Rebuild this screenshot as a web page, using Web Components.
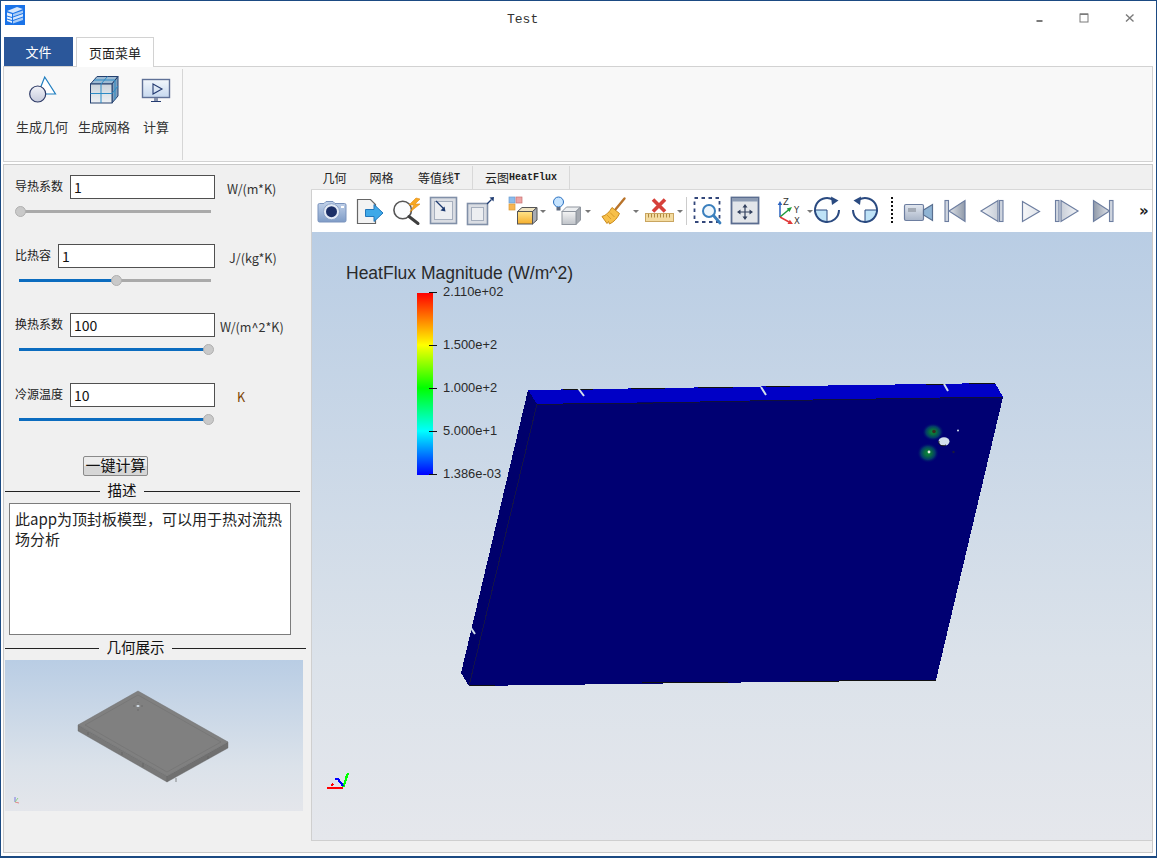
<!DOCTYPE html>
<html>
<head>
<meta charset="utf-8">
<title>Test</title>
<style>
html, body { margin: 0; padding: 0; background: #fff; }
body { font-family: "Noto Sans CJK SC", "Open Sans", sans-serif; color: #222; }
</style>
</head>
<body>
<app-window>
  <title-bar slot="top">Test</title-bar>
  <ribbon-bar slot="top">
    <ribbon-button icon="geometry" width="62">生成几何</ribbon-button>
    <ribbon-button icon="grid" width="62">生成网格</ribbon-button>
    <ribbon-button icon="monitor" width="42">计算</ribbon-button>
  </ribbon-bar>
  <side-panel slot="side">
    <param-block label="导热系数" value="1" unit-gap="12" level="0">W/(m*K)</param-block>
    <param-block label="比热容" value="1" unit-gap="14" level="51">J/(kg*K)</param-block>
    <param-block label="换热系数" value="100" unit-gap="5" level="100" style="margin-bottom:1px">W/(m^2*K)</param-block>
    <param-block label="冷源温度" value="10" unit-gap="22" level="100" tint="#7a4200">K</param-block>
    <push-button>一键计算</push-button>
    <group-title lead="95" width="295">描述</group-title>
    <note-box>此app为顶封板模型，可以用于热对流热场分析</note-box>
    <group-title lead="94" width="301" style="margin-top:4px">几何展示</group-title>
    <preview-view></preview-view>
  </side-panel>
  <view-panel slot="main">
    <view-tab slot="tabs">几何</view-tab>
    <view-tab slot="tabs">网格</view-tab>
    <view-tab slot="tabs" divided style="padding-left:13px">等值线<span class="m">T</span></view-tab>
    <view-tab slot="tabs" divided>云图<span class="m">HeatFlux</span></view-tab>
    <tool-icon slot="tools" icon="camera" width="38"></tool-icon>
    <tool-icon slot="tools" icon="export" width="36"></tool-icon>
    <tool-icon slot="tools" icon="spark" width="38"></tool-icon>
    <tool-icon slot="tools" icon="boxin" width="37"></tool-icon>
    <tool-icon slot="tools" icon="boxout" width="42"></tool-icon>
    <tool-icon slot="tools" icon="color" width="45" drop></tool-icon>
    <tool-icon slot="tools" icon="light" width="48" drop></tool-icon>
    <tool-icon slot="tools" icon="broom" width="44" drop></tool-icon>
    <tool-icon slot="tools" icon="ruler" width="41" drop></tool-icon>
    <tool-sep slot="tools" width="6"></tool-sep>
    <tool-icon slot="tools" icon="zoombox" width="38"></tool-icon>
    <tool-icon slot="tools" icon="fit" width="45"></tool-icon>
    <tool-icon slot="tools" icon="axes" width="38" drop></tool-icon>
    <tool-icon slot="tools" icon="rotcw" width="37"></tool-icon>
    <tool-icon slot="tools" icon="rotccw" width="41"></tool-icon>
    <tool-sep slot="tools" width="12" dotted></tool-sep>
    <tool-icon slot="tools" icon="movie" width="37"></tool-icon>
    <tool-icon slot="tools" icon="first" width="37"></tool-icon>
    <tool-icon slot="tools" icon="prev" width="38"></tool-icon>
    <tool-icon slot="tools" icon="play" width="37"></tool-icon>
    <tool-icon slot="tools" icon="next" width="36"></tool-icon>
    <tool-icon slot="tools" icon="last" width="51"></tool-icon>
    <more-mark slot="tools"></more-mark>
    <vtk-view slot="view">
      <scalar-bar title-text="HeatFlux Magnitude (W/m^2)"></scalar-bar>
    </vtk-view>
  </view-panel>
</app-window>

<script>
const RIBBON_ICONS = {
    geometry: `<svg width="32" height="30" viewBox="0 0 32 30">
        <defs><linearGradient id="c" x1="0" y1="0" x2="0" y2="1"><stop offset="0" stop-color="#f2f3f8"/><stop offset="1" stop-color="#c6cbdc"/></linearGradient></defs>
        <path d="M18.7 2 L29.5 19 H12 Z" fill="#fff" stroke="#1f7ec0" stroke-width="1.2"/>
        <circle cx="11.7" cy="19" r="8" fill="url(#c)" stroke="#2d3a66" stroke-width="1.2"/>
    </svg>`,
    grid: `<svg width="32" height="30" viewBox="0 0 32 30">
        <defs><linearGradient id="f" x1="0" y1="0" x2="0" y2="1"><stop offset="0" stop-color="#c9d2da"/><stop offset="1" stop-color="#eef1f4"/></linearGradient></defs>
        <path d="M2.5 9 L9 1.5 H30 L24 9 Z" fill="#9dbad2" stroke="#24406f"/>
        <path d="M24 9 L30 1.5 V21 L24 28 Z" fill="#7f9fbd" stroke="#24406f"/>
        <rect x="2.5" y="9" width="21.5" height="19" fill="url(#f)" stroke="#24406f"/>
        <path d="M13 9 V28 M2.5 18.5 H24 M13 9 L19.5 1.5 M6 5 H27 M27 5 V24.5 M24 18.5 L30 11" fill="none" stroke="#2b8bc6"/>
    </svg>`,
    monitor: `<svg width="32" height="30" viewBox="0 0 32 30">
        <defs><linearGradient id="s" x1="0" y1="0" x2="0" y2="1"><stop offset="0" stop-color="#f2f7fc"/><stop offset="1" stop-color="#c6d8ee"/></linearGradient></defs>
        <rect x="2.5" y="4.5" width="27" height="18" fill="url(#s)" stroke="#5f7197" stroke-width="1.4"/>
        <path d="M13 9 L22 14 L13 19 Z" fill="none" stroke="#233a70" stroke-width="1.1"/>
        <rect x="14" y="23" width="4" height="3" fill="#8793ad"/>
        <rect x="11" y="26" width="10" height="1" fill="#233a70"/>
    </svg>`
};

const VCR = (d, bar, fill) => `<defs><linearGradient id="v" x1="0" y1="0" x2="1" y2="0"><stop offset="0" stop-color="${fill[0]}"/><stop offset="1" stop-color="${fill[1]}"/></linearGradient></defs>
    <path d="${d}" fill="url(#v)" stroke="#6d7ea0" stroke-width="1.2"/>` +
    (bar != null ? `<rect x="${bar}" y="4.500" width="3.500" height="21" fill="#cfd5df" stroke="#6d7ea0" stroke-width="1.100"/>` : "");

const ROTATE = `<path d="M14 14H2A12 12 0 0 0 14 26Z" fill="#bfe3f7" stroke="#2a4a80"/>
        <path d="M26 14A12 12 0 1 1 20 3.600" fill="none" stroke="#2a4a80" stroke-width="2"/>
        <path d="M18 .5L25.500 4.500L19 9Z" fill="#2a4a80"/>`;

const TOOL_ICONS = {
    camera: `<defs><linearGradient id="g" x1="0" y1="0" x2="0" y2="1"><stop offset="0" stop-color="#c3d3ea"/><stop offset="1" stop-color="#7f9cc7"/></linearGradient></defs>
        <path d="M2.500 7.500H7l2-2h7l2 2h9.500a1.500 1.500 0 0 1 1.500 1.500V24.500a1.500 1.500 0 0 1-1.500 1.500H2.500A1.500 1.500 0 0 1 1 24.500V9a1.500 1.500 0 0 1 1.500-1.500z" fill="url(#g)" stroke="#7a93bd"/>
        <circle cx="14.500" cy="15.700" r="8" fill="#e3eaf5" stroke="#8ea4c8"/>
        <circle cx="14.500" cy="15.700" r="5.500" fill="#1c2f66"/>
        <rect x="24" y="10" width="3" height="2" fill="#fff"/>`,
    export: `<path d="M2.500 3.500H15.500L20.500 8.500V27.500H2.500Z" fill="#f3f3f3" stroke="#666" stroke-width="1.200"/>
        <path d="M10.500 13.500H19V8.500L28 17L19 25.500V20.500H10.500Z" fill="#3fa9e8" stroke="#2277bb"/>`,
    spark: `<circle cx="11.700" cy="14" r="8.800" fill="#fbfcfd" stroke="#555" stroke-width="1.600"/>
        <path d="M18 20.500L27 27.500" stroke="#3e3e3e" stroke-width="3" stroke-linecap="round"/>
        <path d="M25 2L18 9H23L19 16L29 8H24L29 3Z" fill="#f7a823" stroke="#e38a10" stroke-width=".6"/>`,
    boxin: `<rect x="1.500" y="1.500" width="26" height="26" fill="#dadde3" stroke="#8190a8" stroke-width="1.600"/>
        <rect x="5.500" y="5.500" width="18" height="18" fill="#eceef1" stroke="#a5aebd"/>
        <path d="M7 5L14.500 12.500" stroke="#1d3a70" stroke-width="1.200"/><path d="M11.500 14.500L16.500 15.500L15.500 10.500Z" fill="#1d3a70"/>`,
    boxout: `<rect x="1.500" y="7.500" width="20" height="21" fill="#dadde3" stroke="#8190a8" stroke-width="1.600"/>
        <rect x="5.500" y="11.500" width="12" height="13" fill="#eceef1" stroke="#a5aebd"/>
        <path d="M21 8L25.500 3.500" stroke="#1d3a70" stroke-width="1.200"/><path d="M23.500 1.500L28 1L27.500 5.500Z" fill="#1d3a70"/>`,
    color: `<defs><linearGradient id="g" x1="0" y1="0" x2="0" y2="1"><stop offset="0" stop-color="#ffe48a"/><stop offset="1" stop-color="#f5ae2c"/></linearGradient></defs>
        <rect x="1" y="1" width="6" height="6" fill="#8cbcec" stroke="#6b9cd0" stroke-width=".7"/>
        <rect x="8" y="1" width="6" height="6" fill="#eda3a3" stroke="#c97070" stroke-width=".7"/>
        <rect x="1" y="8" width="6" height="6" fill="#f7b552" stroke="#d99a3a" stroke-width=".7"/>
        <path d="M9.500 15.500L14 11.500H29L24.500 15.500Z" fill="#efe3c0" stroke="#555"/>
        <path d="M24.500 15.500L29 11.500V24L24.500 28Z" fill="#a9adb5" stroke="#555"/>
        <rect x="9.500" y="15.500" width="15" height="12.500" fill="url(#g)" stroke="#555"/>`,
    light: `<defs><linearGradient id="g" x1="0" y1="0" x2="0" y2="1"><stop offset="0" stop-color="#f4f4f4"/><stop offset="1" stop-color="#bfc3c9"/></linearGradient></defs>
        <circle cx="5.500" cy="6" r="5" fill="#c6e4ff" stroke="#2a70c0"/>
        <rect x="3.500" y="11" width="4" height="3.500" fill="#5c6a80"/>
        <path d="M9 15.500L13.500 11H27.500L23 15.500Z" fill="#eceef0" stroke="#8f959e"/>
        <path d="M23 15.500L27.500 11V24L23 28.500Z" fill="#a6aab1" stroke="#8f959e"/>
        <rect x="9" y="15.500" width="14" height="13" fill="url(#g)" stroke="#8f959e"/>`,
    broom: `<path d="M23.500 2.500L14 14" stroke="#b8732a" stroke-width="2.400" stroke-linecap="round"/>
        <path d="M11 11.500L18.500 17.500C16.500 22 13 26 8.500 28L7.500 25.500L6 27.500L1 20.500C5 19.500 8.500 16 11 11.500Z" fill="#f7c04a" stroke="#c98a1e"/>
        <path d="M6 19L10 23M9 16.500L13.500 21" stroke="#d99a2a"/>`,
    ruler: `<path d="M8 3.500L20 15.500M20 3.500L8 15.500" stroke="#d6403a" stroke-width="3.600"/>
        <rect x=".5" y="17.500" width="28" height="8" fill="#f3dba0" stroke="#c9a560"/>
        <path d="M3.500 18V21.500M6.500 18V21.500M9.500 18V21.500M12.500 18V21.500M15.500 18V21.500M18.500 18V21.500M21.500 18V21.500M24.500 18V21.500" stroke="#b08a40"/>`,
    zoombox: `<rect x="2.500" y="2" width="25" height="24" fill="none" stroke="#33477a" stroke-width="1.800" stroke-dasharray="3.500 3.500"/>
        <circle cx="17" cy="15" r="6" fill="#eef6fc" stroke="#3a7fbd" stroke-width="2"/>
        <path d="M21.500 19.500L28 27" stroke="#3a7fbd" stroke-width="2.800" stroke-linecap="round"/>`,
    fit: `<rect x="1.500" y="1.500" width="27" height="26" fill="#e3e6ea" stroke="#5b6d90" stroke-width="1.800"/>
        <rect x="2" y="2" width="26" height="3.500" fill="#8c9bb3"/>
        <path d="M15 10V22M9 16H21" stroke="#33415e" stroke-width="1.200"/>
        <path d="M15 8L12.500 11.500H17.500ZM15 24L12.500 20.500H17.500ZM7 16L10.500 13.500V18.500ZM23 16L19.500 13.500V18.500Z" fill="#33415e"/>`,
    axes: `<path d="M5 21V8" stroke="#2a62c0" stroke-width="1.500"/><path d="M5 5L2.700 9H7.300Z" fill="#2a62c0"/>
        <path d="M5 21L14 13.500" stroke="#1f9a3a" stroke-width="1.500"/><path d="M17 11L11.800 12.500L14.500 16Z" fill="#1f9a3a"/>
        <path d="M5 21L14 26" stroke="#e03a3a" stroke-width="1.500"/><path d="M18 28L12.500 28L14.800 23.800Z" fill="#e03a3a"/>
        <text x="8" y="9" font-family="DejaVu Sans" font-size="8.500" fill="#333">Z</text>
        <text x="19" y="17" font-family="DejaVu Sans" font-size="8.500" fill="#333">Y</text>
        <text x="19" y="28" font-family="DejaVu Sans" font-size="8.500" fill="#333">X</text>`,
    rotcw: ROTATE,
    rotccw: `<g transform="translate(29,0) scale(-1,1)">${ROTATE}</g>`,
    movie: `<defs><linearGradient id="g" x1="0" y1="0" x2="0" y2="1"><stop offset="0" stop-color="#e2e7ef"/><stop offset="1" stop-color="#a9b5c8"/></linearGradient></defs>
        <rect x="1.500" y="8.500" width="19" height="16" rx="1.500" fill="url(#g)" stroke="#6d7ea0" stroke-width="1.200"/>
        <rect x="5" y="12" width="8" height="4" fill="#a4abb6"/>
        <path d="M20.500 14L29.500 8.500V24.500L20.500 19Z" fill="#8fb4d4" stroke="#5a7090" stroke-width="1.200"/>`,
    first: VCR("M9 15L25 4.500V25.500Z", 5, ["#e0e3e8", "#8f99a9"]),
    prev: VCR("M4 15L21 4.500V25.500Z", 22.500, ["#f2f4f7", "#c8ced8"]),
    play: VCR("M7.500 5.500L24.500 15.500L7.500 25.500Z", null, ["#f6f7f9", "#dfe3e9"]),
    next: VCR("M26 15L9 4.500V25.500Z", 3.500, ["#c8ced8", "#f2f4f7"]),
    last: VCR("M21.500 15L5.500 4.500V25.500Z", 21.500, ["#8f99a9", "#e0e3e8"])
};

class AppWindow extends HTMLElement {
    constructor() {
        super();
        this.attachShadow({ mode: "open" });
        this.shadowRoot.innerHTML = `
            <style>
                :host { display: flex; flex-direction: column; box-sizing: border-box; width: 1157px; height: 858px; border: 1px solid #1b4a82; border-bottom-width: 2px; background: #fff; overflow: hidden; }
                .frame { display: flex; flex: none; box-sizing: border-box; height: 689px; margin: 2px 3px 0 2px; border: 1px solid #c9c9c9; background: #f0f0f0; }
            </style>
            <slot name="top"></slot>
            <div class="frame"><slot name="side"></slot><slot name="main"></slot></div>
        `;
    }
}

class TitleBar extends HTMLElement {
    constructor() {
        super();
        this.attachShadow({ mode: "open" });
        this.shadowRoot.innerHTML = `
            <style>
                :host { display: flex; align-items: flex-start; height: 36px; color: #333; }
                .logo { margin: 4px 0 0 4px; flex: none; }
                .name { margin: 10px 0 0 482px; font: 13px/18px "Liberation Mono", monospace; }
                .btns { display: flex; margin-left: auto; margin-right: 4px; }
                .btn { width: 45px; height: 34px; display: flex; align-items: center; justify-content: center; }
            </style>
            <svg class="logo" width="20" height="20" viewBox="0 0 20 20">
                <rect width="20" height="20" fill="#1a73e8"/>
                <path d="M2 6L12 2L18 4L8 8Z" fill="#d6e7fc"/>
                <path d="M8 9L18 5.500V8L8 11.500Z" fill="#a9ccf6"/>
                <path d="M8 12.500L18 9V11.500L8 15Z" fill="#d6e7fc"/>
                <path d="M8 16L18 12.500V15L8 18.500Z" fill="#a9ccf6"/>
                <path d="M2 7.500L7 9V18L2 16Z" fill="#e4effd"/>
                <path d="M2 11L7 12.500M2 14L7 15.500" stroke="#1a73e8"/>
            </svg>
            <div class="name"><slot></slot></div>
            <div class="btns">
                <div class="btn"><svg width="10" height="10" viewBox="0 0 10 10"><rect x="1.500" y="7" width="6" height="2" fill="#7a7a7a"/></svg></div>
                <div class="btn"><svg width="11" height="11" viewBox="0 0 11 11"><rect x="1" y="1" width="8" height="8" fill="none" stroke="#7a7a7a"/><rect x="1" y=".5" width="8" height="1.500" fill="#7a7a7a"/></svg></div>
                <div class="btn"><svg width="10" height="10" viewBox="0 0 10 10"><path d="M1 1.500L8.500 8.500M8.500 1.500L1 8.500" stroke="#7a7a7a" stroke-width="1.400"/></svg></div>
            </div>
        `;
    }
}

class RibbonBar extends HTMLElement {
    constructor() {
        super();
        this.attachShadow({ mode: "open" });
        this.shadowRoot.innerHTML = `
            <style>
                :host { display: block; margin: 0 3px 0 2px; font-size: 13px; }
                .tabs { display: flex; height: 29px; padding-left: 1px; }
                .tab { box-sizing: border-box; display: flex; align-items: center; justify-content: center; }
                .file { width: 69px; height: 29px; background: #2b579a; color: #fff; }
                .page { width: 78px; height: 30px; margin-left: 3px; background: #fff; border: 1px solid #d2d2d2; border-bottom: 0; position: relative; color: #222; }
                .panel { box-sizing: border-box; display: flex; height: 96px; border: 1px solid #d2d2d2; background: #f8f8f8; padding: 8px 0 0 7px; }
                .sep { width: 1px; height: 91px; margin: -6px 0 0 5px; background: #d6d6d6; }
            </style>
            <div class="tabs"><div class="tab file">文件</div><div class="tab page">页面菜单</div></div>
            <div class="panel"><slot></slot><div class="sep"></div></div>
        `;
    }
}

class RibbonButton extends HTMLElement {
    connectedCallback() {
        this.attachShadow({ mode: "open" });
        this.shadowRoot.innerHTML = `
            <style>
                :host { display: flex; flex-direction: column; align-items: center; width: ${this.getAttribute("width")}px; }
                svg { display: block; }
                .label { margin-top: 13px; font-size: 13px; line-height: 18px; color: #333; white-space: nowrap; }
            </style>
            ${RIBBON_ICONS[this.getAttribute("icon")]}
            <div class="label"><slot></slot></div>
        `;
    }
}

class SidePanel extends HTMLElement {
    constructor() {
        super();
        this.attachShadow({ mode: "open" });
        this.shadowRoot.innerHTML = `
            <style>
                :host { display: flex; flex-direction: column; flex: none; box-sizing: border-box; width: 307px; padding: 10px 0 0 1px; }
            </style>
            <slot></slot>
        `;
    }
}

class ParamBlock extends HTMLElement {
    connectedCallback() {
        const level = Number(this.getAttribute("level"));
        const center = 5.5 + level * 1.88;
        this.attachShadow({ mode: "open" });
        this.shadowRoot.innerHTML = `
            <style>
                :host { display: block; flex: none; height: 69px; margin-left: 10px; width: 290px; }
                .row { display: flex; height: 24px; }
                .label { font-size: 12px; line-height: 22px; margin-right: 7px; white-space: nowrap; color: #222; }
                .field { box-sizing: border-box; flex: none; width: var(--w); height: 24px; border: 1px solid #505050; background: #fff; padding-left: 3px; font-size: 14px; line-height: 22px; color: #111; }
                .unit { margin-left: ${this.getAttribute("unit-gap")}px; font-size: 12.600px; line-height: 28px; white-space: nowrap; color: ${this.getAttribute("tint") || "#333"}; }
                .slider { position: relative; width: 196px; height: 12px; margin-top: 6px; }
                .track { position: absolute; left: 4px; right: 0; top: 4.5px; height: 3px; background: #aaa; }
                .fill { position: absolute; left: 4px; width: ${level ? center - 4 : 0}px; top: 4.5px; height: 3px; background: #0b6cbf; }
                .thumb { position: absolute; left: ${center - 5.5}px; top: .5px; box-sizing: border-box; width: 11px; height: 11px; border-radius: 50%; background: #c9c9c9; border: 1px solid #b0b0b0; }
            </style>
            <div class="row">
                <div class="label">${this.getAttribute("label")}</div>
                <div class="field" style="--w:${this.getAttribute("label").length === 3 ? 157 : 145}px">${this.getAttribute("value")}</div>
                <div class="unit"><slot></slot></div>
            </div>
            <div class="slider"><div class="track"></div><div class="fill"></div><div class="thumb"></div></div>
        `;
    }
}

class PushButton extends HTMLElement {
    constructor() {
        super();
        this.attachShadow({ mode: "open" });
        this.shadowRoot.innerHTML = `
            <style>
                :host { display: flex; justify-content: center; flex: none; box-sizing: border-box; width: 65px; height: 20px; margin: 4px 0 0 78px; border: 1px solid #8a8a8a; border-radius: 2px; background: linear-gradient(#ececec 50%, #d6d6d6 50%); font-size: 15px; line-height: 16px; color: #111; white-space: nowrap; }
            </style>
            <slot></slot>
        `;
    }
}

class GroupTitle extends HTMLElement {
    connectedCallback() {
        this.attachShadow({ mode: "open" });
        this.shadowRoot.innerHTML = `
            <style>
                :host { display: flex; align-items: center; flex: none; height: 18px; margin-top: 6px; width: ${this.getAttribute("width")}px; font-size: 14.500px; color: #111; }
                .line { height: 1px; background: #222; }
                .lead { width: ${this.getAttribute("lead")}px; flex: none; }
                .rest { flex: 1; }
                .text { padding: 0 7.500px; margin-top: -3px; white-space: nowrap; }
            </style>
            <div class="line lead"></div><div class="text"><slot></slot></div><div class="line rest"></div>
        `;
    }
}

class NoteBox extends HTMLElement {
    constructor() {
        super();
        this.attachShadow({ mode: "open" });
        this.shadowRoot.innerHTML = `
            <style>
                :host { display: block; flex: none; box-sizing: border-box; width: 282px; height: 132px; margin: 3px 0 0 4px; padding: 5px 4px 0 5px; border: 1px solid #7c7c7c; background: #fff; font-size: 15px; line-height: 20px; color: #222; }
            </style>
            <slot></slot>
        `;
    }
}

class PreviewView extends HTMLElement {
    constructor() {
        super();
        this.attachShadow({ mode: "open" });
        this.shadowRoot.innerHTML = `
            <style>
                :host { display: block; flex: none; width: 298px; height: 151px; margin-top: 3px; }
                svg { display: block; }
            </style>
            <svg width="298" height="151" viewBox="5 660 298 151">
                <defs><linearGradient id="bg" x1="0" y1="0" x2="0" y2="1"><stop offset="0" stop-color="#b9cde4"/><stop offset=".7" stop-color="#dbe2ea"/><stop offset="1" stop-color="#e4e6eb"/></linearGradient></defs>
                <rect x="5" y="660" width="298" height="151" fill="url(#bg)"/>
                <path d="M78 725L167 776V782L78 731Z" fill="#787878" stroke="#666" stroke-width=".4"/>
                <path d="M167 776L228 742V748L167 782Z" fill="#707070" stroke="#666" stroke-width=".4"/>
                <path d="M138 691L228 742L167 776L78 725Z" fill="#808080" stroke="#6c6c6c" stroke-width=".5"/>
                <path d="M138 695L221 742L167 772L85 725Z" fill="none" stroke="#6a6a6a" stroke-width=".4"/>
                <path d="M88 732V735M122 752V755M143 763V767M176 778V782M208 756V759" stroke="#5f5f5f" stroke-width=".7"/>
                <ellipse cx="138" cy="706" rx="1.600" ry="1" fill="#d5e0ec"/>
                <path d="M133 706H135M141 706H143M138 702V703M138 709V711" stroke="#5a5a5a" stroke-width=".6"/>
                <path d="M15 797L15 802" stroke="#7a7ae0"/><path d="M15 802L19 803" stroke="#e08a8a"/><path d="M15 802L18 798" stroke="#8ad08a"/>
            </svg>
        `;
    }
}

class ViewPanel extends HTMLElement {
    constructor() {
        super();
        this.attachShadow({ mode: "open" });
        this.shadowRoot.innerHTML = `
            <style>
                :host { display: flex; flex-direction: column; flex: 1; min-width: 0; }
                .tabs { display: flex; height: 24px; margin-top: 1px; border-bottom: 1px solid #d8d8d8; box-sizing: border-box; }
                .tools { display: flex; align-items: center; height: 42px; padding-left: 5px; background: #fff; }
                .wrap { border-left: 1px solid #cfcfcf; border-bottom: 1px solid #cfcfcf; }
            </style>
            <div class="tabs"><slot name="tabs"></slot></div>
            <div class="wrap">
                <div class="tools"><slot name="tools"></slot></div>
                <slot name="view"></slot>
            </div>
        `;
    }
}

class ViewTab extends HTMLElement {
    connectedCallback() {
        const divided = this.hasAttribute("divided");
        this.attachShadow({ mode: "open" });
        this.shadowRoot.innerHTML = `
            <style>
                :host { display: flex; align-items: center; height: 23px; padding: ${divided ? "0 12px" : "0 11.500px"}; font-size: 12px; white-space: nowrap; color: #222; ${divided ? "border-right: 1px solid #d8d8d8;" : ""} }
                ::slotted(.m) { font-family: "Liberation Mono", monospace; font-size: 10px; font-weight: bold; }
            </style>
            <slot></slot>
        `;
    }
}

class ToolIcon extends HTMLElement {
    connectedCallback() {
        this.attachShadow({ mode: "open" });
        const drop = this.hasAttribute("drop") ? `<div class="drop"></div>` : "";
        this.shadowRoot.innerHTML = `
            <style>
                :host { display: flex; align-items: center; flex: none; width: ${this.getAttribute("width")}px; height: 30px; }
                svg { display: block; flex: none; overflow: visible; }
                .drop { margin-left: 2px; width: 0; height: 0; border: 3px solid transparent; border-top: 3px solid #777; border-bottom: 0; }
            </style>
            <svg width="30" height="30" viewBox="0 0 30 30">${TOOL_ICONS[this.getAttribute("icon")]}</svg>${drop}
        `;
    }
}

class ToolSep extends HTMLElement {
    connectedCallback() {
        this.attachShadow({ mode: "open" });
        const mark = this.hasAttribute("dotted")
            ? "width: 0; height: 26px; margin-top: -2px; border-left: 2px dotted #111;"
            : "width: 1px; height: 28px; background: #ccc;";
        this.shadowRoot.innerHTML = `
            <style>
                :host { display: block; flex: none; width: ${this.getAttribute("width")}px; }
                div { ${mark} }
            </style>
            <div></div>
        `;
    }
}

class MoreMark extends HTMLElement {
    constructor() {
        super();
        this.attachShadow({ mode: "open" });
        this.shadowRoot.innerHTML = `
            <style>:host { display: block; font: bold 15px "DejaVu Sans", sans-serif; color: #222; }</style>»
        `;
    }
}

class VtkView extends HTMLElement {
    constructor() {
        super();
        this.attachShadow({ mode: "open" });
        this.shadowRoot.innerHTML = `
            <style>
                :host { display: block; position: relative; width: 840px; height: 608px; }
                svg { display: block; }
            </style>
            <svg width="840" height="608" viewBox="312 232 840 608" shape-rendering="crispEdges">
                <defs>
                    <linearGradient id="bg" x1="0" y1="0" x2="0" y2="1"><stop offset="0" stop-color="#b9cde4"/><stop offset=".7" stop-color="#dbe2ea"/><stop offset="1" stop-color="#e5e7ec"/></linearGradient>
                    <radialGradient id="hot"><stop offset="0" stop-color="#0b8a3a"/><stop offset=".3" stop-color="#0a7040"/><stop offset=".65" stop-color="#033a6a"/><stop offset="1" stop-color="#000070" stop-opacity="0"/></radialGradient>
                </defs>
                <rect x="312" y="232" width="840" height="608" fill="url(#bg)"/>
                <path d="M528 390L537 404L469 686L461 673Z" fill="#00006c"/>
                <path d="M528 390L995 383L1003 397L537 404Z" fill="#0000c6"/>
                <path d="M537 404L1003 397L936 680L469 686Z" fill="#000072"/>
                <g shape-rendering="auto">
                    <ellipse cx="933" cy="432" rx="11" ry="9" fill="url(#hot)"/>
                    <ellipse cx="928" cy="453" rx="11" ry="10" fill="url(#hot)"/>
                    <circle cx="934" cy="431.500" r="1.800" fill="#3a2a20"/>
                    <circle cx="929" cy="452" r="1.400" fill="#e8f0e8"/>
                    <ellipse cx="944" cy="441.500" rx="5.500" ry="4.200" fill="#d2dfec"/>
                    <path d="M939 441C938 445 942 447 946 445" fill="none" stroke="#111" stroke-width="1"/>
                    <circle cx="958" cy="430.500" r="1" fill="#d2dfec"/>
                    <circle cx="953.500" cy="452" r="1.200" fill="#1a1a3a"/>
                </g>
                <path d="M537 404H563L595 403.500H630L700 402L750 401L1003 397" fill="none" stroke="#10103a"/>
                <path d="M563 389H593M631 388H665M698 387H733M766 386H790M926 384H944M969 383H995M936 680L790 681.500M729 682L642 683M469 686L495 685.500" fill="none" stroke="#111"/>
                <path d="M537 404L469 686" fill="none" stroke="#13134a"/>
                <g shape-rendering="auto" stroke="#d2dfec" stroke-width="2" fill="none">
                    <path d="M578 388L584 396M761 387L766 395M944 384L948 391M471 628L475 634"/>
                </g>
                <g fill="none" stroke-width="2.200">
                    <path d="M343 788H327" stroke="#f00"/>
                    <path d="M343.500 787L348 773" stroke="#0f0"/>
                    <path d="M348 776L345 778" stroke="#0f0"/>
                    <path d="M343 786L338 779" stroke="#00f"/>
                    <path d="M339 779H335" stroke="#00f"/>
                    <path d="M331 786L333 784" stroke="#f00" stroke-width="1.500"/>
                </g>
            </svg>
            <slot></slot>
        `;
    }
}

class ScalarBar extends HTMLElement {
    connectedCallback() {
        const ticks = [["2.110e+02", -0.5], ["1.500e+2", 28.6], ["1.000e+2", 52.2], ["5.000e+1", 75.8], ["1.386e-03", 99.5]];
        this.attachShadow({ mode: "open" });
        this.shadowRoot.innerHTML = `
            <style>
                :host { display: block; position: absolute; left: 34px; top: 31px; color: #2a2a2a; }
                .title { height: 30px; font: 17.500px/20px "Liberation Sans", sans-serif; white-space: nowrap; }
                .bar { position: relative; width: 16px; height: 182px; margin-left: 71px; background: linear-gradient(#f00 0%, #ff0 28.6%, #0f0 52.2%, #0ff 75.8%, #00f 100%); }
                .tick { position: absolute; left: 12px; height: 1px; width: 8px; background: #111; }
                .val { position: absolute; left: 26px; transform: translateY(-50%); font: 12.900px/16px "Liberation Sans", sans-serif; white-space: nowrap; }
            </style>
            <div class="title">${this.getAttribute("title-text")}</div>
            <div class="bar">
                ${ticks.map(t => `<div class="tick" style="top:${t[1]}%"></div><div class="val" style="top:${t[1]}%">${t[0]}</div>`).join("")}
            </div>
        `;
    }
}

customElements.define("app-window", AppWindow);
customElements.define("title-bar", TitleBar);
customElements.define("ribbon-bar", RibbonBar);
customElements.define("ribbon-button", RibbonButton);
customElements.define("side-panel", SidePanel);
customElements.define("param-block", ParamBlock);
customElements.define("push-button", PushButton);
customElements.define("group-title", GroupTitle);
customElements.define("note-box", NoteBox);
customElements.define("preview-view", PreviewView);
customElements.define("view-panel", ViewPanel);
customElements.define("view-tab", ViewTab);
customElements.define("tool-icon", ToolIcon);
customElements.define("tool-sep", ToolSep);
customElements.define("more-mark", MoreMark);
customElements.define("vtk-view", VtkView);
customElements.define("scalar-bar", ScalarBar);
</script>
</body>
</html>
